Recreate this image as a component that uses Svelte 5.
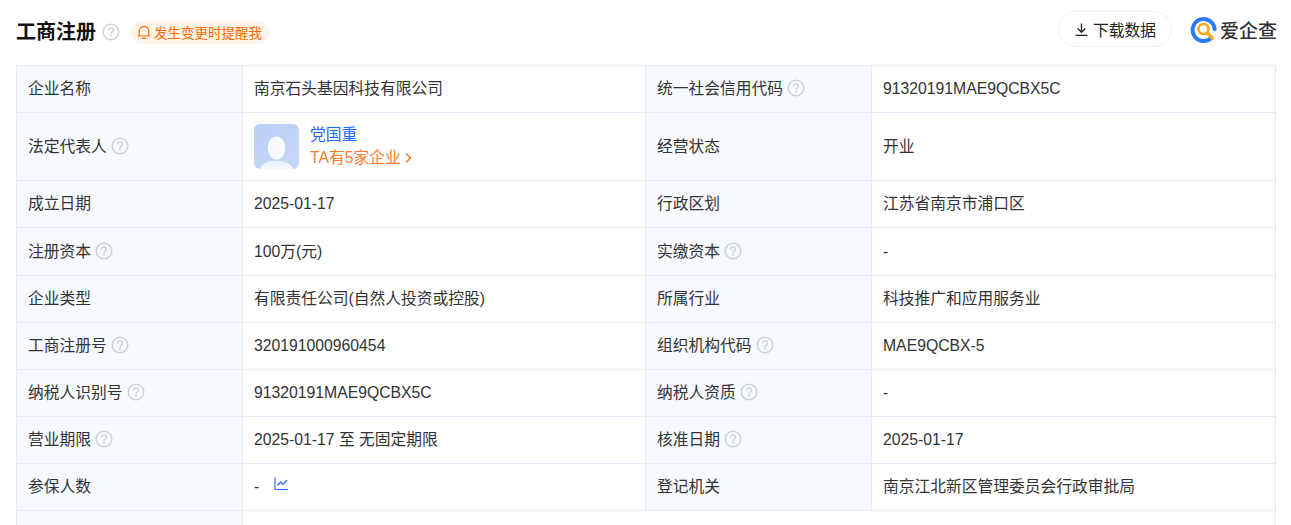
<script>
  const rows = [
    [{ label: '企业名称' }, { value: '南京石头基因科技有限公司' }, { label: '统一社会信用代码', help: true }, { value: '91320191MAE9QCBX5C' }],
    [{ label: '法定代表人', help: true }, { person: true }, { label: '经营状态' }, { value: '开业' }],
    [{ label: '成立日期' }, { value: '2025-01-17' }, { label: '行政区划' }, { value: '江苏省南京市浦口区' }],
    [{ label: '注册资本', help: true }, { value: '100万(元)' }, { label: '实缴资本', help: true }, { value: '-' }],
    [{ label: '企业类型' }, { value: '有限责任公司(自然人投资或控股)' }, { label: '所属行业' }, { value: '科技推广和应用服务业' }],
    [{ label: '工商注册号', help: true }, { value: '320191000960454' }, { label: '组织机构代码', help: true }, { value: 'MAE9QCBX-5' }],
    [{ label: '纳税人识别号', help: true }, { value: '91320191MAE9QCBX5C' }, { label: '纳税人资质', help: true }, { value: '-' }],
    [{ label: '营业期限', help: true }, { value: '2025-01-17 至 无固定期限' }, { label: '核准日期', help: true }, { value: '2025-01-17' }],
    [{ label: '参保人数' }, { value: '-', chart: true }, { label: '登记机关' }, { value: '南京江北新区管理委员会行政审批局' }],
    [{ label: '' }, { value: '', span: 3 }]
  ];
</script>

{#snippet help(cls)}
  <svg class={cls} width="18" height="18" viewBox="0 0 18 18" fill="none">
    <circle cx="9" cy="9" r="7.8" stroke="#d2d2d2" stroke-width="1.5" />
    <path d="M6.6 7.1a2.4 2.4 0 1 1 3.7 2c-.8.5-1.3 1-1.3 1.9" stroke="#d2d2d2" stroke-width="1.5" stroke-linecap="round" />
    <circle cx="9" cy="13" r="1" fill="#d2d2d2" />
  </svg>
{/snippet}

<div class="page">
  <header class="head">
    <div class="title">
      <h2>工商注册</h2>
      {@render help('title-help')}
      <span class="remind">
        <svg width="14" height="15" viewBox="0 0 14 15" fill="none" stroke="#ff6a00" stroke-width="1.2">
          <path d="M2.2 11V6.2a4.8 4.8 0 0 1 9.6 0V11M1 11h12" stroke-linecap="round" />
          <path d="M5.5 13.4h3" stroke-linecap="round" />
        </svg>
        发生变更时提醒我
      </span>
    </div>
    <div class="tools">
      <button class="download">
        <svg width="15" height="15" viewBox="0 0 15 15" fill="none" stroke="#222" stroke-width="1.3">
          <path d="M7.5 1.5v8.5M3.6 6.4l3.9 3.9 3.9-3.9M1.5 13.3h12" />
        </svg>
        下载数据
      </button>
      <div class="logo">
        <svg width="27" height="27" viewBox="0 0 27 27" fill="none">
          <path d="M20.5 22.6A11 11 0 1 1 24.6 13" stroke="#2b7bf6" stroke-width="4" stroke-linecap="round" />
          <circle cx="13.5" cy="13" r="5" stroke="#ffa81e" stroke-width="2.6" />
          <path d="M17.5 17l5 5.2" stroke="#ffa81e" stroke-width="3.4" stroke-linecap="round" />
        </svg>
        <span>爱企查</span>
      </div>
    </div>
  </header>

  <table>
    <colgroup>
      <col class="c1" /><col class="c2" /><col class="c3" /><col class="c4" />
    </colgroup>
    <tbody>
      {#each rows as row, i}
        <tr class:tall={i === 1} class:wide={i === 3}>
          {#each row as cell}
            {#if cell.label !== undefined}
              <th>
                <span class="lab">{cell.label}{#if cell.help}{@render help('cell-help')}{/if}</span>
              </th>
            {:else if cell.person}
              <td>
                <div class="person">
                  <div class="avatar">
                    <svg width="45" height="45" viewBox="0 0 45 45">
                      <defs>
                        <linearGradient id="bg" x1="0" y1="0" x2="1" y2="1">
                          <stop offset="0" stop-color="#b9cff5" />
                          <stop offset="1" stop-color="#c6d8f9" />
                        </linearGradient>
                        <linearGradient id="shoulder" x1="0" y1="0" x2="0" y2="1">
                          <stop offset="0" stop-color="#e6eefb" />
                          <stop offset="1" stop-color="#f6f9fe" />
                        </linearGradient>
                      </defs>
                      <rect width="45" height="45" rx="6" fill="url(#bg)" />
                      <ellipse cx="22.5" cy="24" rx="8.7" ry="11.5" fill="#f8fafe" />
                      <path d="M6 45c1.5-5 8-8.500 16.500-8.500S37.500 40 39 45z" fill="url(#shoulder)" />
                    </svg>
                  </div>
                  <div class="who">
                    <span class="name">党国重</span>
                    <span class="ta">TA有5家企业
                      <svg width="9" height="12" viewBox="0 0 9 12" fill="none" stroke="#ff7a2e" stroke-width="1.6"><path d="M2 1.500 6.500 6 2 10.500" /></svg>
                    </span>
                  </div>
                </div>
              </td>
            {:else}
              <td colspan={cell.span ?? 1}>
                <span class="val">{cell.value}</span>
                {#if cell.chart}
                  <svg class="chart" width="14" height="14" viewBox="0 0 14 14" fill="none" stroke="#2a6bf0" stroke-width="1.2">
                    <path d="M1 .5v12h13" />
                    <path d="M3.500 8.500 6.500 5l2.500 2.500L13 3" />
                  </svg>
                {/if}
              </td>
            {/if}
          {/each}
        </tr>
      {/each}
    </tbody>
  </table>
</div>

<style>
  :global(body) {
    margin: 0;
    background: #fff;
    overflow: hidden;
  }
  .page {
    height: 525px;
    overflow: hidden;
    padding: 0 14px 0 16px;
    box-sizing: border-box;
    font-family: "Liberation Sans", "Noto Sans CJK SC", sans-serif;
    color: #333;
    font-size: 15.75px;
  }
  .head {
    height: 65px;
    display: flex;
    justify-content: space-between;
    align-items: flex-start;
  }
  .title {
    display: flex;
    align-items: center;
    height: 20px;
    margin-top: 22px;
  }
  h2 {
    margin: 0;
    font-size: 20px;
    line-height: 20px;
    font-weight: 700;
    color: #111;
  }
  .title-help {
    margin-left: 6px;
  }
  .remind {
    margin-left: 11px;
    height: 23px;
    padding: 0 7px 0 6px;
    display: flex;
    align-items: center;
    gap: 3px;
    border-radius: 12px;
    background: #fff3ea;
    color: #ff6a00;
    font-size: 13.5px;
  }
  .tools {
    display: flex;
    align-items: center;
    margin-top: 11px;
  }
  .download {
    height: 36px;
    width: 114px;
    display: flex;
    align-items: center;
    justify-content: center;
    gap: 4px;
    background: #fff;
    border: 1px solid #eceff5;
    border-radius: 18px;
    font: inherit;
    color: #222;
    padding: 0;
  }
  .logo {
    margin-left: 18px;
    display: flex;
    align-items: center;
    gap: 3px;
    font-size: 19px;
    font-weight: 500;
    color: #333;
  }
  table {
    width: 1259px;
    table-layout: fixed;
    border-collapse: collapse;
  }
  .c1, .c3 { width: 226px; }
  .c2 { width: 403px; }
  .c4 { width: 404px; }
  tr { height: 47px; }
  tr.tall { height: 68px; }
  tr.wide { height: 48px; }
  th, td {
    border: 1px solid #e4ecf9;
    padding: 0 11px;
    text-align: left;
    font-weight: 400;
    line-height: 22px;
  }
  th {
    background: #f6f9fe;
    color: #333;
  }
  .lab {
    display: inline-flex;
    align-items: center;
  }
  .cell-help {
    margin: -2px 0 0 4px;
  }
  .person {
    display: flex;
    align-items: center;
    gap: 11px;
  }
  .avatar {
    height: 45px;
    width: 45px;
  }
  .who {
    display: flex;
    flex-direction: column;
    gap: 1px;
    margin-top: -1px;
  }
  .name {
    color: #1a66ff;
  }
  .ta {
    color: #ff7a2e;
    display: flex;
    align-items: center;
    gap: 3px;
  }
  .chart {
    margin-left: 10px;
    vertical-align: 1px;
  }
</style>
